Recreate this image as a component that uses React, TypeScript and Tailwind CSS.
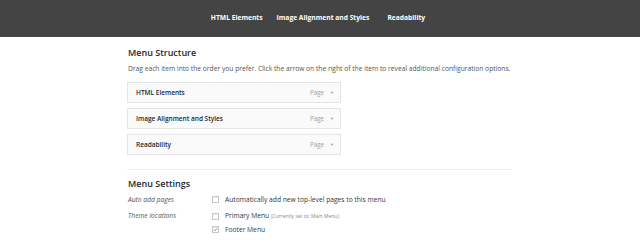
import React from "react";

const items = ["HTML Elements", "Image Alignment and Styles", "Readability"];

function Check({ checked }: { checked?: boolean }) {
  return (
    <span className="flex h-[7px] w-[7px] items-center justify-center border border-[#c8c8c8] bg-white shadow-[inset_0_1px_1px_rgba(0,0,0,0.08)]">
      {checked && (
        <svg viewBox="0 0 10 10" className="h-[7px] w-[7px]">
          <path d="M2 5.2 L4.2 7.4 L8.4 2.4" fill="none" stroke="#1e8cbe" strokeWidth="1.6" />
        </svg>
      )}
    </span>
  );
}

export default function App() {
  return (
    <div className="w-[640px] h-[246px] bg-white overflow-hidden" style={{ fontFamily: '"Open Sans", "Noto Sans", sans-serif' }}>
      <div className="h-[37px] bg-[#444444] flex items-center justify-center pr-[4px] text-white font-bold text-[6.7px]">
        <span>HTML Elements</span>
        <span className="ml-[14px]">Image Alignment and Styles</span>
        <span className="ml-[18px]">Readability</span>
      </div>
      <div className="mx-auto w-[384px] pt-[10px] text-[#32373c]">
        <div className="text-[9px] font-semibold leading-[12px] text-[#23282d] h-[12px]">Menu Structure</div>
        <div className="mt-[5px] text-[6.7px] leading-[9px] text-[#555] whitespace-nowrap">
          Drag each item into the order you prefer. Click the arrow on the right of the item to reveal additional configuration options.
        </div>
        <div className="mt-[9px] flex flex-col gap-[5px] w-[214px] -ml-[1px]">
          {items.map((t) => (
            <div key={t} className="h-[21px] border border-[#e5e5e5] bg-[#fafafa] flex items-center pl-[8px] pr-[6px]">
              <span className="font-semibold text-[6.5px] text-[#23282d]">{t}</span>
              <span className="ml-auto text-[6.2px] text-[#a0a0a0]">Page</span>
              <span className="ml-[6px] text-[4px] text-[#a0a0a0]">▼</span>
            </div>
          ))}
        </div>
        <div className="mt-[14px] border-t border-[#eeeeee] -ml-[1px]" />
        <div className="mt-[8px] text-[9px] font-semibold leading-[12px] text-[#23282d]">Menu Settings</div>
        <div className="mt-[5px] flex text-[6.7px] leading-[9px]">
          <div className="w-[84px] italic text-[#555]">Auto add pages</div>
          <label className="flex items-center gap-[6px] text-[#32373c]">
            <Check />
            <span>Automatically add new top-level pages to this menu</span>
          </label>
        </div>
        <div className="mt-[7px] flex text-[6.7px] leading-[9px]">
          <div className="w-[84px] italic text-[#555]">Theme locations</div>
          <div className="flex flex-col gap-[4px]">
            <label className="flex items-center gap-[6px] text-[#32373c]">
              <Check />
              <span>
                Primary Menu <span className="text-[5px] text-[#888]">(Currently set to: Main Menu)</span>
              </span>
            </label>
            <label className="flex items-center gap-[6px] text-[#32373c]">
              <Check checked />
              <span>Footer Menu</span>
            </label>
          </div>
        </div>
      </div>
    </div>
  );
}
